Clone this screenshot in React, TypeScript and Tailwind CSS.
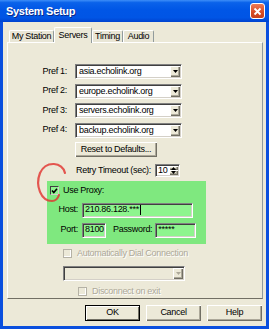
import type { ReactNode } from 'react'

const sunken =
  'border border-t-[#808080] border-l-[#808080] border-b-white border-r-white shadow-[inset_1px_1px_#404040,inset_-1px_-1px_#d4d0c8]'
const raised =
  'bg-[#ece9d8] shadow-[inset_1px_1px_#fff,inset_-1px_-1px_#716f64,inset_-2px_-2px_#aca899]'

function Arrow({ disabled }: { disabled?: boolean }) {
  return (
    <svg width="5" height="3" viewBox="0 0 5 3" aria-hidden>
      <polygon points="0,0 5,0 2.5,3" fill={disabled ? '#aca899' : '#000'} />
    </svg>
  )
}

function Combo({ value, w, disabled }: { value?: string; w: string; disabled?: boolean }) {
  return (
    <div
      className={`flex h-[15px] items-stretch p-[1px] ${sunken} ${w} ${
        disabled ? 'bg-[#ece9d8]' : 'bg-white'
      }`}
    >
      <span className="flex flex-1 items-center pl-[2px] leading-none">{value}</span>
      <span className={`flex w-[10px] items-center justify-center ${raised}`}>
        <Arrow disabled={disabled} />
      </span>
    </div>
  )
}

function Check({ checked, disabled }: { checked?: boolean; disabled?: boolean }) {
  return (
    <span
      className={`flex h-[9px] w-[9px] flex-none items-center justify-center border ${
        disabled
          ? 'border-[#b5b2a5] bg-[#ece9d8] shadow-[inset_-1px_-1px_#fff]'
          : 'border-[#404040] border-b-[#d4d0c8] border-r-[#d4d0c8] bg-[#8ef58e]'
      }`}
    >
      {checked && (
        <svg width="7" height="6" viewBox="0 0 7 6" aria-hidden>
          <path d="M1 2.5 L2.8 4.5 L6 0.8" stroke="#000" strokeWidth="1.6" fill="none" />
        </svg>
      )}
    </span>
  )
}

function Button({ children, main }: { children: ReactNode; main?: boolean }) {
  return (
    <div
      className={`flex h-[16px] w-[55px] items-center justify-center ${raised} ${
        main ? 'outline outline-1 outline-black -outline-offset-1 shadow-[inset_2px_2px_#fff,inset_-2px_-2px_#716f64]' : ''
      }`}
    >
      {children}
    </div>
  )
}

function Tab({ label, w, active }: { label: string; w: string; active?: boolean }) {
  return (
    <div
      className={`flex items-center justify-center rounded-t-[2px] border-l border-t border-r border-l-white border-t-white border-r-[#919b9c] ${w} ${
        active ? 'z-10 -mb-[1px] h-[16px] bg-[#ece9d8]' : 'h-[12px] bg-[#e9e6d6]'
      }`}
    >
      {label}
    </div>
  )
}

function Field({ value, w, cursor }: { value: string; w: string; cursor?: boolean }) {
  return (
    <div className={`flex h-[15px] items-center bg-[#8ef58e] pl-[2px] ${sunken} ${w}`}>
      {value}
      {cursor && <span className="ml-[1px] h-[10px] w-[1px] bg-black" />}
    </div>
  )
}

export default function App() {
  const prefs = ['asia.echolink.org', 'europe.echolink.org', 'servers.echolink.org', 'backup.echolink.org']
  const greyText = 'text-[#aca899] [text-shadow:1px_1px_0_#fff]'

  return (
    <div className="relative flex h-[329px] w-[269px] flex-col overflow-hidden bg-[#0a4fde] font-['Liberation_Sans',Arial,sans-serif] text-[9px] tracking-[-0.3px] text-black">
      {/* title bar */}
      <div className="flex h-[22px] flex-none items-center justify-between bg-[linear-gradient(to_bottom,#3d8ef8_0%,#0a62ea_12%,#0056e6_45%,#0055e5_80%,#0043cf_100%)] pl-[6px] pr-[4px]">
        <span className="text-[11px] font-bold tracking-[-0.3px] text-white [text-shadow:1px_1px_0_#0a2a8a]">
          System Setup
        </span>
        <span className="flex h-[16px] w-[15px] items-center justify-center rounded-[3px] border border-white bg-[linear-gradient(to_bottom,#ec7a57,#d64b24_60%,#c5401c)]">
          <svg width="9" height="9" viewBox="0 0 9 9" aria-hidden>
            <path d="M1.5 1.5 L7.5 7.5 M7.5 1.5 L1.5 7.5" stroke="#fff" strokeWidth="1.8" />
          </svg>
        </span>
      </div>

      {/* body */}
      <div className="mx-[3px] mb-[3px] flex flex-1 flex-col bg-[#ece9d8] pt-[5px]">
        <div className="flex items-end pl-[6px]">
          <Tab label="My Station" w="w-[45px]" />
          <Tab label="Servers" w="w-[38px]" active />
          <Tab label="Timing" w="w-[31px]" />
          <Tab label="Audio" w="w-[31px]" />
        </div>

        <div className="ml-[4px] mr-[3px] flex h-[257px] flex-col border border-l-white border-t-white border-r-[#919b9c] border-b-[#716f64] pt-[21px]">
          <div className="flex flex-col gap-y-[4.5px]">
            {prefs.map((p, i) => (
              <div key={p} className="flex items-center">
                <span className="w-[60px] pr-[1px] text-right">Pref {i + 1}:</span>
                <span className="ml-[7px]">
                  <Combo value={p} w="w-[107px]" />
                </span>
              </div>
            ))}
          </div>

          <div className={`ml-[67px] mt-[4.5px] flex h-[15px] w-[82px] items-center justify-center ${raised}`}>
            Reset to Defaults...
          </div>

          <div className="ml-[68px] mt-[7px] flex items-center gap-[4px]">
            <span>Retry Timeout (sec):</span>
            <div className={`flex h-[13px] w-[25px] items-stretch bg-white p-[1px] ${sunken}`}>
              <span className="flex flex-1 items-center pl-[1px]">10</span>
              <span className="flex w-[9px] flex-col">
                <span className={`flex flex-1 items-center justify-center ${raised}`}>
                  <svg width="5" height="3" viewBox="0 0 5 3" aria-hidden>
                    <polygon points="0,3 5,3 2.5,0" fill="#000" />
                  </svg>
                </span>
                <span className={`flex flex-1 items-center justify-center ${raised}`}>
                  <Arrow />
                </span>
              </span>
            </div>
          </div>

          {/* proxy group */}
          <div className="ml-[39px] mt-[4px] flex h-[64px] w-[159px] flex-col bg-[#7fe87f] pl-[3px] pt-[3px]">
            <div className="flex items-center gap-[4px]">
              <Check checked />
              <span>Use Proxy:</span>
            </div>
            <div className="mt-[5px] flex items-center">
              <span className="w-[28px] text-right">Host:</span>
              <span className="ml-[4px]">
                <Field value="210.86.128.***" w="w-[111px]" cursor />
              </span>
            </div>
            <div className="mt-[5px] flex items-center">
              <span className="w-[28px] text-right">Port:</span>
              <span className="ml-[4px]">
                <Field value="8100" w="w-[24px]" />
              </span>
              <span className="ml-[7px]">Password:</span>
              <span className="ml-[3px]">
                <Field value="*****" w="w-[41px]" />
              </span>
            </div>
          </div>

          <div className="ml-[55px] mt-[3px] flex items-center gap-[5px]">
            <Check disabled />
            <span className={greyText}>Automatically Dial Connection</span>
          </div>
          <div className="ml-[55px] mt-[5px]">
            <Combo w="w-[122px]" disabled />
          </div>
          <div className="ml-[70px] mt-[4px] flex items-center gap-[5px]">
            <Check disabled />
            <span className={greyText}>Disconnect on exit</span>
          </div>
        </div>

        <div className="mr-[4px] mt-[6px] flex justify-end gap-[6px]">
          <Button main>OK</Button>
          <Button>Cancel</Button>
          <Button>Help</Button>
        </div>
      </div>

      {/* hand-drawn red circle */}
      <svg className="pointer-events-none absolute left-0 top-0" width="269" height="329" aria-hidden>
        <path
          d="M65 173 C63 162 46 160 40 173 C35 186 41 201 52 201 C56 201 58 198 59 195"
          stroke="#e2322e"
          strokeWidth="2.2"
          fill="none"
          strokeLinecap="round"
          opacity="0.8"
          style={{ filter: 'blur(0.4px)' }}
        />
      </svg>
    </div>
  )
}
